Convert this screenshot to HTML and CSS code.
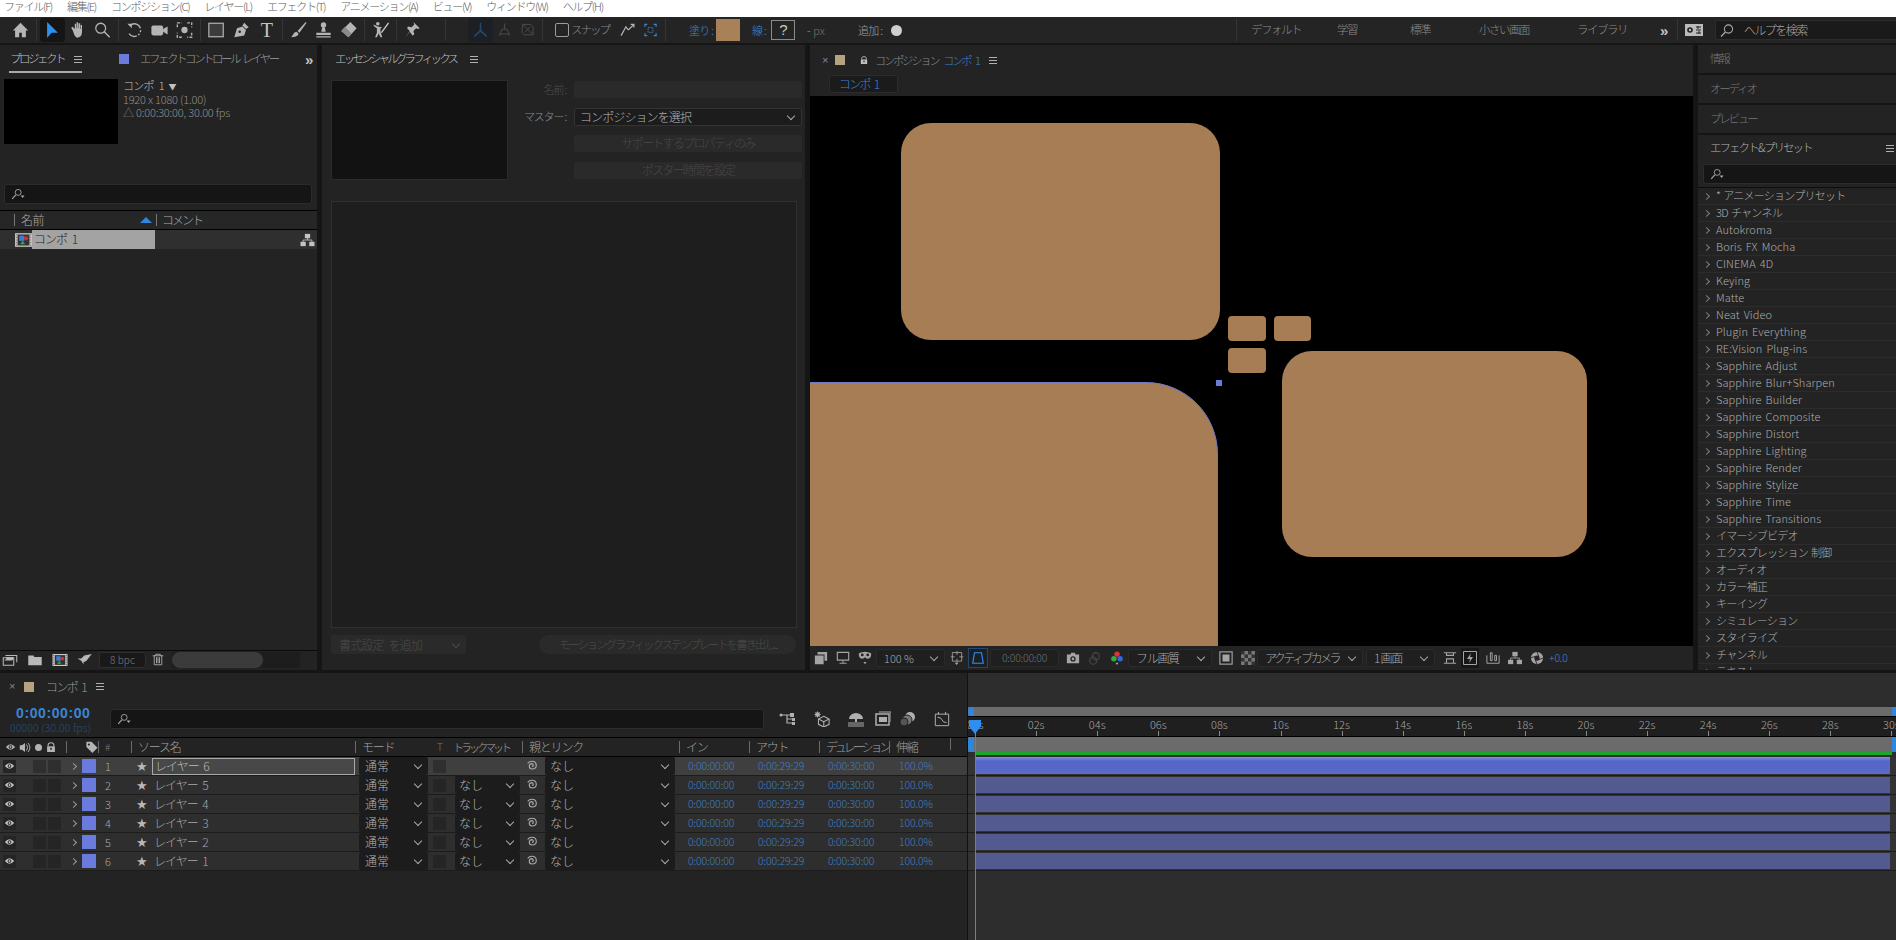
FILE: index.html
```html
<!DOCTYPE html>
<html lang="ja">
<head>
<meta charset="utf-8">
<title>After Effects</title>
<link rel="stylesheet" href="styles.css">
</head>
<body>
<svg class="defs" width="0" height="0">
  <defs>
    <symbol id="i-home" viewBox="0 0 20 20"><path d="M10 2 1.500 10.500H4V18h4.500v-5h3v5H16v-7.500h2.500z" fill="currentColor"/></symbol>
    <symbol id="i-arrow" viewBox="0 0 20 20"><path d="M4 1v18l5-6 7 0z" fill="#2f8ff0"/></symbol>
    <symbol id="i-hand" viewBox="0 0 20 20"><path d="M5 11 3 7.500l1.500-1L7 9V3h1.500v5h.5V1.500h1.500V8h.5V2.500H13V9h.5V4.500H15V12q0 6-5 6.500Q7 18.500 5 11z" fill="currentColor"/></symbol>
    <symbol id="i-zoom" viewBox="0 0 20 20"><circle cx="8" cy="8" r="5.500" fill="none" stroke="currentColor" stroke-width="1.400"/><path d="m12 12 6 6" stroke="currentColor" stroke-width="1.600"/></symbol>
    <symbol id="i-rot" viewBox="0 0 20 20"><path d="M5 5a7 7 0 1 1-1 9" fill="none" stroke="currentColor" stroke-width="1.500" stroke-dasharray="14 2 2 2 2 2"/><path d="M2 3h5v5z" fill="currentColor"/></symbol>
    <symbol id="i-cam" viewBox="0 0 20 20"><rect x="1" y="5" width="13" height="11" rx="2" fill="currentColor"/><path d="M14 9 19 6v9l-5-3z" fill="currentColor"/></symbol>
    <symbol id="i-behind" viewBox="0 0 20 20"><path d="M2 2h5M13 2h5v5M18 13v5h-5M7 18H2v-5M2 7V2" fill="none" stroke="currentColor" stroke-width="1.500" stroke-dasharray="3 1.500"/><circle cx="10" cy="10" r="3.500" fill="currentColor"/></symbol>
    <symbol id="i-rect" viewBox="0 0 20 20"><rect x="1.500" y="2.500" width="16" height="15" fill="#3c3c3c" stroke="currentColor" stroke-width="1.300"/></symbol>
    <symbol id="i-pen" viewBox="0 0 20 20"><path d="M2 18 5 8l6-2 4 4-2 6zM11 5l2-3 5 5-3 2z" fill="currentColor"/><circle cx="8" cy="12" r="1.400" fill="#232323"/></symbol>
    <symbol id="i-brush" viewBox="0 0 20 20"><path d="M18 1 9 11l2 2L19 2zM8 12q-3 0-4 3l-2 3q5 0 7-2 2-2 0-3z" fill="currentColor"/></symbol>
    <symbol id="i-stamp" viewBox="0 0 20 20"><circle cx="10" cy="4.500" r="3" fill="currentColor"/><path d="M8.500 7h3l1 5h-5zM2 13h16v2.500H2zM2 17h16v1.300H2z" fill="currentColor"/></symbol>
    <symbol id="i-eraser" viewBox="0 0 20 20"><path d="m12 1 7 7-9 10-8-7z" fill="currentColor"/><path d="m2 11 4-4.500 7.500 7.500-3.500 4z" fill="#8a8a8a"/></symbol>
    <symbol id="i-puppet" viewBox="0 0 20 20"><circle cx="7" cy="3" r="2" fill="currentColor"/><path d="m7 6-5-2 1 2 3 2 0 5-2 5h2l2-4 2 4h2l-2-6 0-4 2-1z" fill="currentColor"/><path d="M19 2 11 13" stroke="#ccc" stroke-width="1.500"/></symbol>
    <symbol id="i-pin" viewBox="0 0 20 20"><path d="m11 1 7 7-2 1-2-1-3 3 1 4-2 1-3-4-5 6 5-7-3-3 1-2 4 1 3-3z" fill="currentColor"/></symbol>
    <symbol id="i-axes" viewBox="0 0 20 20"><path d="M10 2v9l-7 6M10 11l7 6" fill="none" stroke="currentColor" stroke-width="1.700"/><circle cx="10" cy="11" r="1.500" fill="currentColor"/></symbol>
    <symbol id="i-axes2" viewBox="0 0 20 20"><path d="M10 2v7M7 9h6l3 6H4zM3 17l3-2M17 17l-3-2" fill="none" stroke="currentColor" stroke-width="1.200"/></symbol>
    <symbol id="i-axes3" viewBox="0 0 20 20"><path d="M4 3h10l3 3v10H6l-3-3zM4 3l13 13M13 6l-6 7" fill="none" stroke="currentColor" stroke-width="1.200"/></symbol>
    <symbol id="i-snap1" viewBox="0 0 20 20"><path d="M2 17 8 6l3 4M14 3l4 0 0 4M18 3l-7 7" fill="none" stroke="currentColor" stroke-width="1.500"/></symbol>
    <symbol id="i-snap2" viewBox="0 0 20 20"><path d="M3 6V3h3M14 3h3v3M17 14v3h-3M6 17H3v-3" fill="none" stroke="currentColor" stroke-width="1.500"/><rect x="7" y="7" width="6" height="6" fill="none" stroke="currentColor" stroke-dasharray="2 1"/></symbol>
    <symbol id="i-search" viewBox="0 0 20 14"><circle cx="9" cy="5" r="3.700" fill="none" stroke="currentColor" stroke-width="1.100"/><path d="M6 8 1.500 13" stroke="currentColor" stroke-width="1.400"/><path d="m12 9h5l-2.500 3z" fill="currentColor"/></symbol>
    <symbol id="i-film" viewBox="0 0 20 16"><rect x="0" y="0" width="20" height="16" fill="#c8c8c8"/><rect x="3" y="1.500" width="14" height="13" fill="#333"/><rect x="5" y="3" width="6" height="6" fill="#3a7ed8"/><circle cx="13" cy="6" r="2.500" fill="#c33"/><path d="M6 13l3-4 3 4z" fill="#3a3"/><path d="M1 2h1M1 5h1M1 8h1M1 11h1M1 14h1M18 2h1M18 5h1M18 8h1M18 11h1M18 14h1" stroke="#333"/></symbol>
    <symbol id="i-flow" viewBox="0 0 16 16"><rect x="5" y="1" width="6" height="5" fill="currentColor"/><rect x="0" y="10" width="6" height="5" fill="currentColor"/><rect x="10" y="10" width="6" height="5" fill="currentColor"/><path d="M8 6v2M3 10V8h10v2" fill="none" stroke="currentColor"/></symbol>
    <symbol id="i-comp" viewBox="0 0 20 16"><path d="M1 5h14v10H1zM4 2h15v9M3 8h10" fill="none" stroke="currentColor" stroke-width="1.400"/><rect x="5" y="4" width="9" height="4" fill="currentColor"/></symbol>
    <symbol id="i-folder" viewBox="0 0 20 16"><path d="M1 2h7l1 2h10v11H1z" fill="currentColor"/></symbol>
    <symbol id="i-rocket" viewBox="0 0 20 16"><path d="M19 0 9 2 5 6 0 6l5 3 3 5 0-3 4-2z" fill="currentColor"/></symbol>
    <symbol id="i-trash" viewBox="0 0 16 16"><path d="M1 3h14M5 3V1h6v2M3 3v12h10V3M6 5v8M8 5v8M10 5v8" fill="none" stroke="currentColor" stroke-width="1.100"/></symbol>
    <symbol id="i-eye" viewBox="0 0 16 12"><path d="M1 6q7-8 14 0-7 8-14 0z" fill="currentColor"/><circle cx="8" cy="6" r="2.800" fill="#222"/><circle cx="8" cy="6" r="1.400" fill="currentColor"/></symbol>
    <symbol id="i-spk" viewBox="0 0 16 14"><path d="M1 4h3l4-3v12l-4-3H1z" fill="currentColor"/><path d="M10 3q3 4 0 8M12 1q5 6 0 12" fill="none" stroke="currentColor" stroke-width="1.300"/></symbol>
    <symbol id="i-lock" viewBox="0 0 14 14"><path d="M3 6V4a4 3 0 0 1 8 0v2" fill="none" stroke="currentColor" stroke-width="1.500"/><path d="M1.500 6h11v8h-11z" fill="currentColor"/><rect x="6" y="8" width="2" height="3" fill="#222"/></symbol>
    <symbol id="i-tag" viewBox="0 0 14 14"><path d="M1 1h6l7 7-6 6-7-7z" fill="currentColor"/><circle cx="4" cy="4" r="1.200" fill="#222"/></symbol>
    <symbol id="i-swirl" viewBox="0 0 14 14"><path d="M7 7.500q1.500 0 1.500-1.500T7 4.200Q4 4.200 3.800 7 3.800 10.500 7 10.500 12 10.500 12 6.500 12 1.500 7 1.500 3.500 1.500 2 4" fill="none" stroke="currentColor" stroke-width="1.300"/></symbol>
    <symbol id="i-tree" viewBox="0 0 18 14"><circle cx="2" cy="3" r="1.500" fill="currentColor"/><path d="M3 3h8M8 3v8h5M8 7h5" fill="none" stroke="currentColor" stroke-width="1.200"/><path d="M11 1h4v4h-4zM13 6h3v3h-3zM13 10h3v3h-3z" fill="currentColor"/></symbol>
    <symbol id="i-solid" viewBox="0 0 18 18"><path d="M11 6l6 3v6l-6 3-6-3V9zM5 9l6 3 6-3M11 12v6" fill="none" stroke="currentColor" stroke-width="1.200"/><path d="M4 0l1 2 2-1-1 2 2 1-2 1 1 2-2-1-1 2-1-2-2 1 1-2-2-1 2-1-1-2 2 1z" fill="currentColor"/></symbol>
    <symbol id="i-shy" viewBox="0 0 18 16"><path d="M2 8a7 6 0 0 1 14 0z" fill="currentColor"/><rect x="8" y="8" width="2" height="3" fill="currentColor"/><rect x="1" y="11" width="16" height="5" fill="#666"/></symbol>
    <symbol id="i-frames" viewBox="0 0 18 16"><path d="M3 3h13v11H3z" fill="none" stroke="currentColor" stroke-width="1.500"/><path d="M6 1h12v10" fill="none" stroke="currentColor"/><rect x="6" y="6" width="8" height="5" fill="currentColor"/></symbol>
    <symbol id="i-motion" viewBox="0 0 18 16"><circle cx="11" cy="6" r="5" fill="currentColor"/><circle cx="8" cy="9" r="5" fill="#777" stroke="#232323"/><circle cx="5" cy="11" r="4" fill="#555" stroke="#232323"/></symbol>
    <symbol id="i-graph" viewBox="0 0 18 18"><path d="M1.500 3.500h15v13h-15zM5 1v3M13 1v3" fill="none" stroke="currentColor" stroke-width="1.100"/><path d="M4 7q4 0 5 3t5 3" fill="none" stroke="currentColor" stroke-width="1.100"/></symbol>
    <symbol id="i-vlayers" viewBox="0 0 16 16"><path d="M4 1h11v10H12V4H4zM1 5h10v10H1z" fill="currentColor"/></symbol>
    <symbol id="i-monitor" viewBox="0 0 16 16"><path d="M1.500 1.500h13v9h-13z" fill="none" stroke="currentColor" stroke-width="1.300"/><path d="M8 11v2M4 14h8" stroke="currentColor" stroke-width="1.300"/></symbol>
    <symbol id="i-mask" viewBox="0 0 18 18"><path d="M1 3q8-4 16 0 0 7-4 7-2 0-4-2-2 2-4 2-4 0-4-7z" fill="currentColor"/><circle cx="5.500" cy="5" r="1.800" fill="#232323"/><circle cx="12.500" cy="5" r="1.800" fill="#232323"/><path d="m7 14h4l-2 3z" fill="currentColor"/></symbol>
    <symbol id="i-grid" viewBox="0 0 16 18"><path d="M2 2h12v11H2zM8 0v5M8 10v5M0 7.500h5M11 7.500h5" fill="none" stroke="currentColor" stroke-width="1.100"/><path d="m5 15h5l-2.500 3z" fill="currentColor"/></symbol>
    <symbol id="i-maskb" viewBox="0 0 16 16"><path d="M4 2h8l2 12H2z" fill="none" stroke="#2f8ff0" stroke-width="1.300"/></symbol>
    <symbol id="i-snapc" viewBox="0 0 16 14"><path d="M1 3h4l1-2h4l1 2h4v10H1z" fill="currentColor"/><circle cx="8" cy="8" r="3" fill="#232323"/><circle cx="8" cy="8" r="1.500" fill="currentColor"/></symbol>
    <symbol id="i-showsnap" viewBox="0 0 16 16"><circle cx="9" cy="6" r="4" fill="none" stroke="#444" stroke-width="1.500"/><circle cx="6" cy="11" r="4" fill="none" stroke="#444" stroke-width="1.500"/></symbol>
    <symbol id="i-rgb" viewBox="0 0 16 18"><circle cx="8" cy="4" r="3.500" fill="#d33"/><circle cx="4" cy="10" r="3.500" fill="#3a4"/><circle cx="12" cy="10" r="3.500" fill="#36d"/><path d="m6 15h4l-2 3z" fill="#aaa"/></symbol>
    <symbol id="i-region" viewBox="0 0 16 16"><rect x="1" y="1" width="14" height="14" fill="none" stroke="currentColor" stroke-width="1.300"/><rect x="4" y="4" width="8" height="8" fill="currentColor"/></symbol>
    <symbol id="i-check" viewBox="0 0 16 16"><rect width="16" height="16" fill="#777"/><path d="M0 0h4v4H0zM8 0h4v4H8zM4 4h4v4H4zM12 4h4v4h-4zM0 8h4v4H0zM8 8h4v4H8zM4 12h4v4H4zM12 12h4v4h-4z" fill="#333"/></symbol>
    <symbol id="i-views" viewBox="0 0 16 16"><path d="M1 2h14M4 2v3h8V2M4 9h8v5H4zM1 14h14" fill="none" stroke="currentColor" stroke-width="1.200"/></symbol>
    <symbol id="i-fast" viewBox="0 0 16 16"><path d="M1.500 1.500h13v13h-13z" fill="none" stroke="currentColor"/><path d="M9 3 5 9h3l-1 4 4-6H8z" fill="currentColor"/></symbol>
    <symbol id="i-bars" viewBox="0 0 16 16"><path d="M1 5v9h14V5M5 2h2v9H5zM10 5h2v6h-2z" fill="none" stroke="currentColor" stroke-width="1.100"/></symbol>
    <symbol id="i-aper" viewBox="0 0 16 16"><circle cx="8" cy="8" r="7" fill="currentColor"/><circle cx="8" cy="8" r="3" fill="#232323"/><path d="m8 1 2 5M15 8l-5 2M8 15l-2-5M1 8l5-2" stroke="#232323"/></symbol>
    <symbol id="i-wkspc" viewBox="0 0 18 12"><rect width="18" height="12" fill="#bbb"/><circle cx="5" cy="6" r="2.800" fill="#222"/><circle cx="5" cy="6" r="1.200" fill="#bbb"/><path d="M11 3h5M11 6h5M11 9h5M13 2v3M14 7v3" stroke="#222"/></symbol>
  </defs>
</svg>

<nav class="menubar">
  <span>ファイル(F)</span><span>編集(E)</span><span>コンポジション(C)</span><span>レイヤー(L)</span><span>エフェクト(T)</span><span>アニメーション(A)</span><span>ビュー(V)</span><span>ウィンドウ(W)</span><span>ヘルプ(H)</span>
</nav>

<header class="toolbar">
  <svg class="ti ic-first"><use href="#i-home"/></svg><i class="tsep"></i>
  <span class="ti active"><svg class="fill"><use href="#i-arrow"/></svg></span>
  <svg class="ti"><use href="#i-hand"/></svg>
  <svg class="ti"><use href="#i-zoom"/></svg><i class="tsep"></i>
  <svg class="ti"><use href="#i-rot"/></svg>
  <svg class="ti"><use href="#i-cam"/></svg>
  <svg class="ti"><use href="#i-behind"/></svg><i class="tsep"></i>
  <svg class="ti"><use href="#i-rect"/></svg>
  <svg class="ti"><use href="#i-pen"/></svg>
  <span class="ti ttool">T</span><i class="tsep"></i>
  <svg class="ti"><use href="#i-brush"/></svg>
  <svg class="ti"><use href="#i-stamp"/></svg>
  <svg class="ti"><use href="#i-eraser"/></svg><i class="tsep"></i>
  <svg class="ti"><use href="#i-puppet"/></svg><i class="tsep"></i>
  <svg class="ti"><use href="#i-pin"/></svg><i class="tsep wide"></i>
  <span class="ti active axisbox dim-blue"><svg class="fill"><use href="#i-axes"/></svg></span>
  <svg class="ti narrow dim"><use href="#i-axes2"/></svg>
  <svg class="ti narrow dim"><use href="#i-axes3"/></svg><i class="tsep"></i>
  <span class="snapbox"></span><span class="snaptxt">スナップ</span>
  <svg class="ti narrow"><use href="#i-snap1"/></svg>
  <svg class="ti narrow bluei"><use href="#i-snap2"/></svg><i class="tsep"></i>
  <span class="blue fill-l">塗り :</span><span class="swatch"></span>
  <span class="blue stroke-l">線 :</span><span class="strokebox">?</span>
  <span class="px"><b>-</b> px</span>
  <span class="add">追加 :</span><span class="addbtn"></span>
  <i class="tsep workspace-sep"></i>
  <div class="workspaces"><span>デフォルト</span><span>学習</span><span>標準</span><span>小さい画面</span><span>ライブラリ</span></div>
  <span class="more">»</span><i class="tsep close"></i>
  <svg class="wk"><use href="#i-wkspc"/></svg>
  <div class="helpsearch"><svg class="helpico"><use href="#i-zoom"/></svg>ヘルプを検索</div>
</header>

<main class="panels">
  <section class="panel project">
    <div class="tabs">
      <span class="tab current">プロジェクト<i class="burger"></i></span>
      <span class="sq"></span><span class="tab-off">エフェクトコントロール レイヤー</span>
      <span class="more pmore">»</span>
    </div>
    <div class="pinfo">
      <div class="thumb"></div>
      <div class="meta">
        <div class="metaname">コンポ 1 <small>▼</small></div>
        <div>1920 x 1080 (1.00)</div>
        <div>△ 0:00:30:00, 30.00 fps</div>
      </div>
    </div>
    <div class="searchbox psearch"><svg class="sico"><use href="#i-search"/></svg></div>
    <div class="phead"><span class="pname">名前</span><span class="sortup"></span><span class="pcomment">コメント</span></div>
    <div class="prow"><svg class="film"><use href="#i-film"/></svg><span class="pitem">コンポ 1</span><span class="grow"></span><svg class="flow"><use href="#i-flow"/></svg></div>
    <div class="grow"></div>
    <div class="pfoot">
      <svg class="fi"><use href="#i-comp"/></svg>
      <svg class="fi"><use href="#i-folder"/></svg>
      <svg class="fi"><use href="#i-film"/></svg>
      <svg class="fi"><use href="#i-rocket"/></svg>
      <span class="bpc">8 bpc</span>
      <svg class="trash"><use href="#i-trash"/></svg>
      <span class="scrolltrack"><i class="scrollthumb"></i></span>
    </div>
  </section>

  <section class="panel essential">
    <div class="tabs"><span class="tab ess-tab">エッセンシャルグラフィックス<i class="burger"></i></span></div>
    <div class="esstop">
      <div class="esspreview"></div>
      <div class="essform">
        <div class="frow"><label class="off">名前 :</label><span class="field"></span></div>
        <div class="frow"><label>マスター :</label><span class="sel masel">コンポジションを選択</span></div>
        <div class="frow"><label></label><span class="field disbtn">サポートするプロパティのみ</span></div>
        <div class="frow"><label></label><span class="field disbtn">ポスター時間を設定</span></div>
      </div>
    </div>
    <div class="essbody"></div>
    <div class="essfoot">
      <span class="sel addfmt">書式設定 を追加</span>
      <span class="exportbtn">モーショングラフィックステンプレートを書き出し...</span>
    </div>
  </section>

  <section class="panel comp">
    <div class="tabs comptabs">
      <span class="x">×</span><span class="tansq"></span><svg class="lockic"><use href="#i-lock"/></svg>
      <span class="comptitle">コンポジション <b>コンポ 1</b></span><i class="burger"></i>
    </div>
    <div class="subtabs"><span class="subtab">コンポ 1</span></div>
    <div class="viewer">
      <div class="shape s1"></div>
      <div class="shape s2"></div>
      <div class="shape s3"></div>
      <div class="shape s4"></div>
      <div class="shape s5"></div>
      <div class="shape s6"></div>
      <div class="handle"></div>
    </div>
    <div class="vbar">
      <svg class="vi first"><use href="#i-vlayers"/></svg>
      <svg class="vi"><use href="#i-monitor"/></svg>
      <svg class="vi"><use href="#i-mask"/></svg>
      <span class="sel vs zoomsel">100 %</span>
      <svg class="vi gridi"><use href="#i-grid"/></svg>
      <span class="vi maskbtn"><svg class="fill"><use href="#i-maskb"/></svg></span>
      <span class="vtime">0:00:00:00</span>
      <svg class="vi"><use href="#i-snapc"/></svg>
      <svg class="vi"><use href="#i-showsnap"/></svg>
      <svg class="vi"><use href="#i-rgb"/></svg>
      <span class="sel vs qual">フル画質</span>
      <svg class="vi"><use href="#i-region"/></svg>
      <svg class="vi"><use href="#i-check"/></svg>
      <span class="sel vs camsel">アクティブカメラ</span>
      <span class="sel vs viewsel">1 画面</span>
      <svg class="vi viewsi"><use href="#i-views"/></svg>
      <span class="vi fastbtn"><svg class="fill"><use href="#i-fast"/></svg></span>
      <svg class="vi"><use href="#i-bars"/></svg>
      <svg class="vi"><use href="#i-flow"/></svg>
      <svg class="vi"><use href="#i-aper"/></svg>
      <span class="exposure">+0.0</span>
    </div>
  </section>

  <aside class="sidepanel">
    <div class="sidetab">情報</div>
    <div class="sidetab">オーディオ</div>
    <div class="sidetab">プレビュー</div>
    <div class="sidetab fxhead">エフェクト &amp; プリセット<i class="burger"></i></div>
    <div class="searchbox fxsearch"><svg class="sico"><use href="#i-search"/></svg></div>
    <ul class="fxlist">
      <li>* アニメーションプリセット</li><li>3D チャンネル</li><li>Autokroma</li><li>Boris FX Mocha</li><li>CINEMA 4D</li><li>Keying</li><li>Matte</li><li>Neat Video</li><li>Plugin Everything</li><li>RE:Vision Plug-ins</li><li>Sapphire Adjust</li><li>Sapphire Blur+Sharpen</li><li>Sapphire Builder</li><li>Sapphire Composite</li><li>Sapphire Distort</li><li>Sapphire Lighting</li><li>Sapphire Render</li><li>Sapphire Stylize</li><li>Sapphire Time</li><li>Sapphire Transitions</li><li>イマーシブビデオ</li><li>エクスプレッション 制御</li><li>オーディオ</li><li>カラー補正</li><li>キーイング</li><li>シミュレーション</li><li>スタイライズ</li><li>チャンネル</li><li>テキスト</li>
    </ul>
  </aside>
</main>

<section class="timeline">
  <div class="tl-left">
    <div class="tl-tab"><span class="x">×</span><span class="tansq"></span><span class="tl-name">コンポ 1</span><i class="burger"></i></div>
    <div class="tl-controls">
      <div class="tc"><div class="tc-main">0:00:00:00</div><div class="tc-sub">00000 (30.00 fps)</div></div>
      <div class="searchbox tlsearch"><svg class="sico"><use href="#i-search"/></svg></div>
      <svg class="tli tl1"><use href="#i-tree"/></svg>
      <svg class="tli tl2"><use href="#i-solid"/></svg>
      <svg class="tli tl3"><use href="#i-shy"/></svg>
      <svg class="tli tl4"><use href="#i-frames"/></svg>
      <svg class="tli tl5"><use href="#i-motion"/></svg>
      <svg class="tli tl6"><use href="#i-graph"/></svg>
    </div>
    <div class="tl-head cols">
      <span class="c-sw hicons"><svg class="h-eye"><use href="#i-eye"/></svg><svg class="h-spk"><use href="#i-spk"/></svg><i class="h-dot"></i><svg class="h-lock"><use href="#i-lock"/></svg></span>
      <span class="c-tag hd"><svg class="h-tag"><use href="#i-tag"/></svg></span>
      <span class="c-num hd">#</span>
      <span class="c-src hd">ソース名</span>
      <span class="c-mode hd">モード</span>
      <span class="c-t tee">T</span>
      <span class="c-trk">トラックマット</span>
      <span class="c-par hd">親とリンク</span>
      <span class="c-in hd">イン</span>
      <span class="c-out hd">アウト</span>
      <span class="c-dur hd">デュレーション</span>
      <span class="c-str hd">伸縮</span>
      <span class="c-end hd"></span>
    </div>
    <div class="tl-row cols selected">
      <span class="c-sw sw"><span class="eyebox"><svg class="eye"><use href="#i-eye"/></svg></span><i class="box first"></i><i class="box"></i></span>
      <span class="c-tag tagcell"><i class="chev"></i><i class="lab"></i></span>
      <span class="c-num num">1</span>
      <span class="c-src src"><span class="star">★</span><span class="lname editing">レイヤー 6</span></span>
      <span class="c-mode"><span class="sel ts">通常</span></span>
      <span class="c-t"><i class="box"></i></span>
      <span class="c-trk"></span>
      <span class="c-par par"><svg class="swirl"><use href="#i-swirl"/></svg><span class="sel ts parsel">なし</span></span>
      <span class="c-in t">0:00:00:00</span><span class="c-out t">0:00:29:29</span><span class="c-dur t">0:00:30:00</span><span class="c-str t">100.0%</span><span class="c-end"></span>
    </div>
    <div class="tl-row cols">
      <span class="c-sw sw"><span class="eyebox"><svg class="eye"><use href="#i-eye"/></svg></span><i class="box first"></i><i class="box"></i></span>
      <span class="c-tag tagcell"><i class="chev"></i><i class="lab"></i></span>
      <span class="c-num num">2</span>
      <span class="c-src src"><span class="star">★</span><span class="lname">レイヤー 5</span></span>
      <span class="c-mode"><span class="sel ts">通常</span></span>
      <span class="c-t"><i class="box"></i></span>
      <span class="c-trk"><span class="sel ts trksel">なし</span></span>
      <span class="c-par par"><svg class="swirl"><use href="#i-swirl"/></svg><span class="sel ts parsel">なし</span></span>
      <span class="c-in t">0:00:00:00</span><span class="c-out t">0:00:29:29</span><span class="c-dur t">0:00:30:00</span><span class="c-str t">100.0%</span><span class="c-end"></span>
    </div>
    <div class="tl-row cols">
      <span class="c-sw sw"><span class="eyebox"><svg class="eye"><use href="#i-eye"/></svg></span><i class="box first"></i><i class="box"></i></span>
      <span class="c-tag tagcell"><i class="chev"></i><i class="lab"></i></span>
      <span class="c-num num">3</span>
      <span class="c-src src"><span class="star">★</span><span class="lname">レイヤー 4</span></span>
      <span class="c-mode"><span class="sel ts">通常</span></span>
      <span class="c-t"><i class="box"></i></span>
      <span class="c-trk"><span class="sel ts trksel">なし</span></span>
      <span class="c-par par"><svg class="swirl"><use href="#i-swirl"/></svg><span class="sel ts parsel">なし</span></span>
      <span class="c-in t">0:00:00:00</span><span class="c-out t">0:00:29:29</span><span class="c-dur t">0:00:30:00</span><span class="c-str t">100.0%</span><span class="c-end"></span>
    </div>
    <div class="tl-row cols">
      <span class="c-sw sw"><span class="eyebox"><svg class="eye"><use href="#i-eye"/></svg></span><i class="box first"></i><i class="box"></i></span>
      <span class="c-tag tagcell"><i class="chev"></i><i class="lab"></i></span>
      <span class="c-num num">4</span>
      <span class="c-src src"><span class="star">★</span><span class="lname">レイヤー 3</span></span>
      <span class="c-mode"><span class="sel ts">通常</span></span>
      <span class="c-t"><i class="box"></i></span>
      <span class="c-trk"><span class="sel ts trksel">なし</span></span>
      <span class="c-par par"><svg class="swirl"><use href="#i-swirl"/></svg><span class="sel ts parsel">なし</span></span>
      <span class="c-in t">0:00:00:00</span><span class="c-out t">0:00:29:29</span><span class="c-dur t">0:00:30:00</span><span class="c-str t">100.0%</span><span class="c-end"></span>
    </div>
    <div class="tl-row cols">
      <span class="c-sw sw"><span class="eyebox"><svg class="eye"><use href="#i-eye"/></svg></span><i class="box first"></i><i class="box"></i></span>
      <span class="c-tag tagcell"><i class="chev"></i><i class="lab"></i></span>
      <span class="c-num num">5</span>
      <span class="c-src src"><span class="star">★</span><span class="lname">レイヤー 2</span></span>
      <span class="c-mode"><span class="sel ts">通常</span></span>
      <span class="c-t"><i class="box"></i></span>
      <span class="c-trk"><span class="sel ts trksel">なし</span></span>
      <span class="c-par par"><svg class="swirl"><use href="#i-swirl"/></svg><span class="sel ts parsel">なし</span></span>
      <span class="c-in t">0:00:00:00</span><span class="c-out t">0:00:29:29</span><span class="c-dur t">0:00:30:00</span><span class="c-str t">100.0%</span><span class="c-end"></span>
    </div>
    <div class="tl-row cols">
      <span class="c-sw sw"><span class="eyebox"><svg class="eye"><use href="#i-eye"/></svg></span><i class="box first"></i><i class="box"></i></span>
      <span class="c-tag tagcell"><i class="chev"></i><i class="lab"></i></span>
      <span class="c-num num">6</span>
      <span class="c-src src"><span class="star">★</span><span class="lname">レイヤー 1</span></span>
      <span class="c-mode"><span class="sel ts">通常</span></span>
      <span class="c-t"><i class="box"></i></span>
      <span class="c-trk"><span class="sel ts trksel">なし</span></span>
      <span class="c-par par"><svg class="swirl"><use href="#i-swirl"/></svg><span class="sel ts parsel">なし</span></span>
      <span class="c-in t">0:00:00:00</span><span class="c-out t">0:00:29:29</span><span class="c-dur t">0:00:30:00</span><span class="c-str t">100.0%</span><span class="c-end"></span>
    </div>
  </div>
  <div class="tl-right">
    <div class="navbar"><i class="handle-l"></i><i class="grow"></i><i class="handle-r"></i></div>
    <div class="ruler">
      <span>00s</span><span>02s</span><span>04s</span><span>06s</span><span>08s</span><span>10s</span><span>12s</span><span>14s</span><span>16s</span><span>18s</span><span>20s</span><span>22s</span><span>24s</span><span>26s</span><span>28s</span><span>30s</span>
    </div>
    <div class="workarea"><i class="handle-l"></i><i class="grow"></i><i class="handle-r"></i></div>
    <div class="green"></div>
    <div class="track first"><i class="bar bright"></i></div>
    <div class="track"><i class="bar"></i></div>
    <div class="track"><i class="bar"></i></div>
    <div class="track"><i class="bar"></i></div>
    <div class="track"><i class="bar"></i></div>
    <div class="track"><i class="bar"></i></div>
    <div class="playhead"><i class="ph-tri"></i><i class="ph-line"></i></div>
  </div>
</section>
</body>
</html>
```

FILE: styles.css
```css
* { box-sizing: border-box; }
html, body { margin: 0; height: 100%; }
body {
  width: 1896px; height: 940px; overflow: hidden;
  background: #151515; color: #b4b4b4;
  font: 300 11px/1 "Noto Sans CJK JP", "Noto Sans", sans-serif;
  letter-spacing: -.7px;
  word-spacing: 3px;
  display: flex; flex-direction: column;
}
i { font-style: normal; display: block; }
.defs { position: absolute; }
.grow { flex: 1; }
.blue { color: #3b86d6; }

.menubar { height: 17px; flex: none; background: #fff; color: #5c5c5c; display: flex; align-items: center; gap: 15px; padding: 0 0 4px 4px; letter-spacing: -1.250px; }

.toolbar { height: 26px; flex: none; background: #242424; display: flex; align-items: center; color: #b8b8b8; }
.ti { width: 25px; height: 20px; flex: none; padding: 1px 3px; color: #b5b5b5; display: block; }
.ti.narrow { width: 23px; padding: 2px 3px; }
.ic-first { margin-left: 8px; }
.ti.active { background: #151515; border-radius: 3px; height: 24px; padding: 3px 3px; }
.fill { width: 100%; height: 100%; display: block; }
.ttool { font: 400 20px/20px "Liberation Serif", serif; padding: 0; text-align: center; color: #c4c4c4; }
.tsep { width: 1px; height: 22px; background: #353535; margin: 0 3px; flex: none; }
.tsep.wide { margin: 0 22px 0 20px; }
.dim { color: #4c4c4c; }
.dim-blue { color: #23496f; }
.axisbox { background: #1c1f24 !important; }
.snapbox { width: 14px; height: 14px; border: 1.500px solid #9c9c9c; border-radius: 2px; flex: none; margin-left: 9px; }
.snaptxt { margin: 0 10px 0 2px; width: 35px; color: #8a8a8a; white-space: nowrap; letter-spacing: -2px; font-size: 11.500px; }
.bluei { color: #3b86d6; }
.fill-l { margin-left: 20px; width: 27px; white-space: nowrap; word-spacing: 0; }
.swatch { width: 24px; height: 22px; background: #a98159; flex: none; }
.stroke-l { margin-left: 12px; width: 19px; white-space: nowrap; word-spacing: 0; }
.strokebox { width: 24px; height: 20px; border: 1px solid #8a8a8a; text-align: center; font: 15px/18px "Liberation Sans", sans-serif; color: #c8c8c8; flex: none; }
.px { margin-left: 12px; width: 20px; color: #777; letter-spacing: 0; white-space: nowrap; word-spacing: 0; }
.px b { color: #3b86d6; font-weight: 400; }
.add { margin-left: 31px; width: 30px; color: #a0a0a0; white-space: nowrap; word-spacing: 0; }
.addbtn { width: 11px; height: 11px; border-radius: 50%; background: #cfcfcf; margin-left: 3px; flex: none; }
.workspace-sep { margin: 0 0 0 334px; }
.workspaces { display: flex; flex: none; margin-left: 14px; color: #8c8c8c; letter-spacing: -1.500px; font-size: 11.500px; }
.workspaces span:nth-child(1) { width: 86px; }
.workspaces span:nth-child(2) { width: 73px; }
.workspaces span:nth-child(3) { width: 69px; }
.workspaces span:nth-child(4) { width: 98px; }
.workspaces span:nth-child(5) { width: 83px; }
.more { font: 700 15px/1 "Liberation Sans", sans-serif; color: #c4c4c4; }
.tsep.close { margin: 0 7px 0 9px; }
.wk { width: 18px; height: 12px; flex: none; }
.helpsearch { margin-left: 12px; flex: 1; height: 20px; background: #1a1a1a; border: 1px solid #2c2c2c; border-right: 0; border-radius: 3px 0 0 3px; display: flex; align-items: center; color: #a8a8a8; font-size: 12px; letter-spacing: -1.500px; }
.helpico { width: 16px; height: 15px; margin: 0 9px 0 3px; transform: scaleX(-1); flex: none; color: #aaa; }

.panels { height: 625px; margin-top: 2px; flex: none; display: flex; gap: 5px; }
.panel { background: #232323; height: 100%; display: flex; flex-direction: column; flex: none; overflow: hidden; }
.project { width: 317px; }
.essential { width: 483px; }
.comp { width: 883px; }

.tabs { height: 28px; display: flex; align-items: center; flex: none; font-size: 11.500px; letter-spacing: -2.500px; color: #9c9c9c; }
.tab { position: relative; display: flex; align-items: center; height: 26px; margin-left: 9px; padding: 0 0 0 1px; color: #c0c0c0; width: 73px; white-space: nowrap; }
.tab.current { border-bottom: 2px solid #aaa; margin-top: 2px; }
.burger { width: 8px; height: 7px; margin-left: 10px; border-top: 1px solid #b0b0b0; border-bottom: 1px solid #b0b0b0; position: relative; flex: none; }
.burger::after { content: ""; position: absolute; left: 0; right: 0; top: 2px; height: 1px; background: #b0b0b0; }
.sq { width: 10px; height: 10px; background: #6a7bd9; margin-left: 37px; flex: none; }
.tab-off { margin-left: 11px; width: 146px; white-space: nowrap; }
.pmore { margin-left: 19px; }

.pinfo { height: 65px; margin-top: 6px; display: flex; flex: none; }
.thumb { width: 114px; height: 65px; background: #000; margin-left: 4px; flex: none; }
.meta { margin-left: 5px; letter-spacing: -.2px; word-spacing: 0; color: #909090; line-height: 13px; }
.metaname { color: #c0c0c0; letter-spacing: -.7px; word-spacing: 3px; }
.metaname small { font-size: 8px; }

.searchbox { background: #151515; border: 1px solid #2c2c2c; border-radius: 3px; display: flex; align-items: center; height: 20px; flex: none; }
.sico { width: 16px; height: 12px; margin-left: 6px; color: #a8a8a8; }
.psearch { margin: 40px 5px 0 4px; }
.phead { margin-top: 6px; height: 20px; border-top: 1px solid #000; border-bottom: 1px solid #000; background: #262626; display: flex; align-items: center; flex: none; font-size: 12px; letter-spacing: -.4px; color: #a8a8a8; }
.pname { margin-left: 14px; padding-left: 6px; border-left: 1px solid #777; width: 126px; }
.sortup { width: 0; height: 0; border: 6px solid transparent; border-top: 0; border-bottom: 6px solid #2f86dd; flex: none; }
.pcomment { margin-left: 4px; padding-left: 5px; border-left: 1px solid #777; letter-spacing: -2px; }
.prow { height: 19px; background: #2f2f2f; display: flex; align-items: center; flex: none; }
.film { width: 17px; height: 14px; margin-left: 15px; flex: none; }
.pitem { background: #a3a3a3; color: #1c1c1c; width: 123px; height: 19px; line-height: 17px; flex: none; padding-left: 2px; font-size: 12px; letter-spacing: -1px; }
.flow { width: 15px; height: 14px; margin-right: 2px; color: #c4c4c4; }
.prow .grow { align-self: stretch; }
.pfoot { height: 18px; margin-bottom: 2px; flex: none; display: flex; align-items: center; border-top: 1px solid #0a0a0a; width: 317px; color: #b8b8b8; }
.fi { width: 16px; height: 12px; margin-left: 9px; flex: none; }
.fi:first-child { margin-left: 2px; }
.bpc { width: 47px; height: 16px; margin-left: 6px; border: 1px solid #2e2e2e; background: #191919; border-radius: 3px; text-align: center; line-height: 14px; font-size: 10px; color: #7d7d7d; letter-spacing: .1px; word-spacing: 0; flex: none; }
.trash { width: 12px; height: 13px; margin-left: 6px; flex: none; }
.scrolltrack { margin-left: 8px; width: 128px; height: 16px; background: #1d1d1d; flex: none; }
.scrollthumb { width: 91px; height: 16px; border-radius: 8px; background: #3b3b3b; }

.ess-tab { width: auto; margin-left: 12px; color: #c0c0c0; white-space: nowrap; letter-spacing: -2.800px; }
.ess-tab .burger { margin-left: 14px; }
.esstop { display: flex; height: 100px; margin-top: 7px; flex: none; }
.esspreview { width: 177px; height: 100px; background: #121212; border: 1px solid #2b2b2b; margin-left: 9px; flex: none; }
.essform { flex: 1; display: flex; flex-direction: column; gap: 10px; margin-top: 1px; padding-right: 3px; }
.frow { display: flex; align-items: center; height: 17px; }
.frow label { width: 58px; text-align: right; color: #8d8d8d; flex: none; white-space: nowrap; word-spacing: 0; letter-spacing: -1.200px; }
.frow label.off { color: #4d4d4d; }
.field { flex: 1; height: 17px; background: #2a2a2a; margin-left: 8px; border-radius: 2px; }
.disbtn { text-align: center; color: #484848; line-height: 16px; font-size: 12px; letter-spacing: -1.700px; }
.sel { display: flex; align-items: center; position: relative; background: #1c1c1c; border-radius: 2px; white-space: nowrap; }
.sel::after { content: ""; position: absolute; right: 7px; top: 50%; width: 5px; height: 5px; margin-top: -4px; border-right: 1px solid #a8a8a8; border-bottom: 1px solid #a8a8a8; transform: rotate(45deg); }
.masel { flex: 1; height: 18px; margin-left: 8px; border: 1px solid #333; padding-left: 5px; color: #b4b4b4; font-size: 12px; letter-spacing: -.9px; }
.essbody { margin: 21px 8px 0 9px; height: 427px; background: #1e1e1e; border: 1px solid #303030; flex: none; }
.essfoot { display: flex; margin-top: 7px; padding-left: 9px; flex: none; }
.addfmt { width: 135px; height: 19px; background: #2a2a2a; color: #4c4c4c; padding-left: 8px; font-size: 12px; letter-spacing: -.8px; }
.addfmt::after { border-color: #4c4c4c; }
.exportbtn { width: 257px; height: 19px; margin-left: 73px; border-radius: 10px; background: #2a2a2a; color: #4c4c4c; text-align: center; line-height: 18px; font-size: 11.500px; letter-spacing: -2.100px; white-space: nowrap; }

.comptabs { height: 30px; color: #8d8d8d; font-size: 11px; letter-spacing: -1.900px; }
.x { color: #888; font-size: 11px; margin-left: 12px; letter-spacing: 0; width: 13px; flex: none; font-family: "Liberation Sans", sans-serif; }
.tansq { width: 10px; height: 10px; background: #b5a27e; flex: none; }
.lockic { width: 8px; height: 10px; margin-left: 15px; color: #c0c0c0; }
.comptitle { margin-left: 7px; white-space: nowrap; word-spacing: 4px; }
.comptitle b { font-weight: 300; color: #3b86d6; }
.comptabs .burger { margin-left: 10px; }
.subtabs { height: 22px; flex: none; padding-left: 19px; border-bottom: 1px solid #000; }
.subtab { display: block; width: 69px; height: 18px; background: #1b1b1b; border: 1px solid #2c2c2c; border-radius: 2px; color: #3b86d6; font-size: 12px; letter-spacing: -1.700px; padding-left: 9px; line-height: 15px; }
.viewer { position: relative; height: 549px; background: #000; overflow: hidden; flex: none; }
.shape { position: absolute; background: #a67d54; }
.s1 { left: 91px; top: 26px; width: 319px; height: 217px; border-radius: 30px; }
.s2 { left: 418px; top: 219px; width: 38px; height: 25px; border-radius: 4px; }
.s3 { left: 464px; top: 219px; width: 37px; height: 25px; border-radius: 4px; }
.s4 { left: 418px; top: 251px; width: 38px; height: 25px; border-radius: 4px; }
.s5 { left: 472px; top: 254px; width: 305px; height: 206px; border-radius: 30px; }
.s6 { left: -2px; top: 285px; width: 410px; height: 270px; border-radius: 0 72px 0 0; border: 1px solid #6f78c9; }
.handle { position: absolute; left: 406px; top: 283px; width: 6px; height: 6px; background: #6a7bd9; }
.vbar { flex: 1; display: flex; align-items: center; color: #b4b4b4; }
.vi { width: 16px; height: 16px; padding: 1px; margin-left: 6px; flex: none; color: #a4a4a4; display: block; }
.vi.first { margin-left: 3px; }
.vi.gridi { margin-left: 4px; }
.vi.viewsi { margin-left: 7px; }
.vs { height: 18px; border: 1px solid #2a2a2a; background: #1f1f1f; margin-left: 3px; padding-left: 7px; flex: none; letter-spacing: -1.300px; font-size: 12px; color: #a8a8a8; }
.zoomsel { width: 69px; letter-spacing: 0; font-size: 11px; word-spacing: 0; }
.maskbtn { background: #1a1f26; border: 1px solid #23496f; height: 20px; width: 20px; padding: 2px; margin-left: 3px; }
.vtime { width: 69px; height: 18px; margin-left: 2px; background: #1f1f1f; border: 1px solid #2a2a2a; border-radius: 2px; color: #6f6f6f; text-align: center; letter-spacing: -.2px; line-height: 15px; font-size: 10.500px; flex: none; }
.qual { width: 84px; }
.camsel { width: 106px; margin-left: 1px; letter-spacing: -2.600px; }
.viewsel { width: 69px; word-spacing: 0; }
.fastbtn { background: #171717; height: 20px; width: 18px; padding: 1px; margin-left: 3px; }
.exposure { color: #3b86d6; margin-left: 4px; letter-spacing: -.2px; font-size: 10.500px; }

.sidepanel { width: 198px; flex: none; background: #232323; height: 100%; overflow: hidden; display: flex; flex-direction: column; }
.sidetab { height: 30px; padding: 0 0 0 12px; display: flex; align-items: center; color: #777; font-size: 11.500px; letter-spacing: -2.200px; border-bottom: 2px solid #151515; flex: none; }
.fxhead { color: #b0b0b0; border-bottom: 0; height: 29px; word-spacing: 0; letter-spacing: -2px; padding-bottom: 3px; }
.fxhead .burger { margin: 0 2px 0 auto; }
.fxsearch { margin: 0 -10px 0 5px; }
.fxlist { list-style: none; margin: 3px 0 0; padding: 0; border-top: 1px solid #0d0d0d; flex: 1; overflow: hidden; color: #adadad; letter-spacing: .1px; word-spacing: 1.500px; }
.fxlist li { height: 17px; border-bottom: 1px solid #2c2c2c; position: relative; padding-left: 18px; line-height: 15px; white-space: nowrap; }
.fxlist li:nth-child(1), .fxlist li:nth-child(2), .fxlist li:nth-child(n+21) { letter-spacing: -.75px; }
.fxlist li::before { content: ""; position: absolute; left: 6px; top: 6px; width: 4px; height: 4px; border-top: 1px solid #7d7d7d; border-right: 1px solid #7d7d7d; transform: rotate(45deg); }

.timeline { margin-top: 3px; flex: 1; display: flex; min-height: 0; background: #232323; }
.tl-left { width: 967px; flex: none; }
.tl-tab { height: 27px; display: flex; align-items: center; }
.tl-tab .x { margin-left: 9px; }
.tl-tab .tansq { margin-left: 2px; }
.tl-name { margin-left: 12px; font-size: 12px; letter-spacing: -1.600px; color: #9c9c9c; }
.tl-controls { height: 37px; display: flex; align-items: flex-start; color: #b0b0b0; }
.tc { width: 110px; flex: none; padding-left: 10px; }
.tc-main { font: 700 14px/15px "Liberation Sans", sans-serif; letter-spacing: .6px; color: #3b86d6; padding-left: 6px; margin-top: 6px; }
.tc-sub { font-size: 10.500px; letter-spacing: .15px; word-spacing: 0; color: #22507d; margin-top: 2px; white-space: nowrap; }
.tlsearch { width: 654px; margin-top: 9px; }
.tli { height: 16px; margin-top: 11px; flex: none; width: 18px; }
.tl1 { margin-left: 15px; }
.tl2 { margin-left: 16px; }
.tl3 { margin-left: 16px; }
.tl4 { margin-left: 8px; }
.tl5 { margin-left: 8px; }
.tl6 { margin-left: 16px; }

.cols { display: grid; grid-template-columns: 66px 32px 33px 224px 75px 20px 72px 157px 70px 70px 70px 61px 17px; align-items: center; }
.tl-head { height: 20px; border-top: 1px solid #000; border-bottom: 1px solid #000; font-size: 12px; color: #a0a0a0; letter-spacing: -1.200px; }
.hd { border-left: 1px solid #6a6a6a; padding-left: 6px; height: 12px; line-height: 11px; white-space: nowrap; }
.hicons { display: flex; align-items: center; color: #b4b4b4; padding-left: 5px; }
.h-eye { width: 11px; height: 8px; flex: none; }
.h-spk { width: 12px; height: 11px; margin-left: 3px; flex: none; }
.h-dot { width: 7px; height: 7px; border-radius: 50%; background: #b4b4b4; margin-left: 4px; flex: none; }
.h-lock { width: 10px; height: 10px; margin-left: 4px; flex: none; }
.h-tag { width: 13px; height: 12px; margin-left: 12px; color: #b4b4b4; }
.c-num.hd { color: #777; font-size: 10px; letter-spacing: 0; }
.tee { color: #777; padding-left: 7px; font-size: 10px; letter-spacing: 0; }
.c-trk { white-space: nowrap; font-size: 11px; letter-spacing: -3px; padding-left: 3px; }
.c-dur.hd { letter-spacing: -3px; }
.c-end { align-self: stretch; }

.tl-row { height: 19px; background: #2e2e2e; border-bottom: 1px solid #1c1c1c; }
.tl-row.selected { background: #3f3f3f; }
.tl-row > span { height: 18px; display: flex; align-items: center; }
.sw { padding-left: 3px; }
.eyebox { width: 13px; height: 13px; display: flex; align-items: center; justify-content: center; background: #252525; flex: none; }
.eye { width: 11px; height: 8px; color: #c4c4c4; }
.box { width: 13px; height: 13px; background: #252525; margin-left: 2px; flex: none; }
.box.first { margin-left: 17px; }
.selected .box { background: #2f2f2f; }
.c-t .box { margin-left: 3px; }
.chev { width: 5px; height: 5px; border-top: 1px solid #9a9a9a; border-right: 1px solid #9a9a9a; transform: rotate(45deg); margin-left: 5px; flex: none; }
.lab { width: 14px; height: 14px; background: #6a7bdd; margin-left: 6px; flex: none; }
.num { padding-left: 7px; color: #aaa; letter-spacing: 0; }
.star { color: #b8b8b8; font: 13px/1 "DejaVu Sans", sans-serif; margin-left: 5px; width: 16px; flex: none; }
.lname { color: #a8a8a8; font-size: 12px; letter-spacing: -1px; padding-left: 2px; flex: 1; height: 17px; line-height: 16px; white-space: nowrap; }
.lname.editing { background: #484848; border: 1px solid #a8a8a8; padding-left: 2px; line-height: 14px; color: #bbb; }
.ts { background: #1c1c1c; height: 18px; color: #b4b4b4; font-size: 12px; padding-left: 6px; letter-spacing: 0; }
.c-mode .ts { width: 69px; margin-left: 4px; }
.trksel { width: 65px; margin-left: 2px; padding-left: 4px; }
.swirl { width: 12px; height: 12px; margin-left: 4px; color: #aaa; flex: none; }
.parsel { width: 130px; margin-left: 7px; padding-left: 5px; }
.t { color: #3f7ec2; letter-spacing: -.1px; font-size: 10.500px; padding-left: 9px; }
.c-str.t { padding-left: 10px; }

.tl-right { flex: 1; position: relative; padding-top: 34px; overflow: hidden; border-left: 1px solid #111; background: #2d2d2d; display: flex; flex-direction: column; }
.tl-right > * { flex: none; }
.navbar, .workarea { background: #6b6b6b; display: flex; }
.navbar { height: 9px; }
.workarea { height: 15px; }
.handle-l { width: 6px; background: #2f86dd; border-radius: 4px 0 0 4px; flex: none; }
.handle-r { width: 4px; background: #2f86dd; flex: none; }
.ruler { height: 21px; background: #1f1f1f; border-top: 1px solid #000; border-bottom: 1px solid #000; display: flex; margin-left: -23.500px; font-size: 11px; color: #a5a5a5; letter-spacing: 0; }
.ruler span { width: 61.100px; flex: none; text-align: center; position: relative; line-height: 14px; }
.ruler span::after { content: ""; position: absolute; left: 50%; bottom: 0; width: 1px; height: 5px; background: #8a8a8a; }
.green { height: 3px; background: #1ba52b; margin: 0 4px 2px 7px; }
.track { height: 19px; padding: 1px 6px 1px 7px; background: #333; border-bottom: 1px solid #1c1c1c; }
.track.first { padding-top: 0; }
.bar { height: 100%; width: 100%; background: #525a8f; }
.bright { background: linear-gradient(#8090dc, #5565c8 25%, #5a6ac6); }
.playhead { position: absolute; left: 0; top: 47px; bottom: 0; width: 14px; display: flex; flex-direction: column; align-items: center; }
.ph-tri { width: 12px; height: 14px; background: #2f8ff0; clip-path: polygon(0 0, 100% 0, 100% 45%, 50% 100%, 0 45%); flex: none; }
.ph-line { width: 1px; flex: 1; background: #2f8ff0; }
```
